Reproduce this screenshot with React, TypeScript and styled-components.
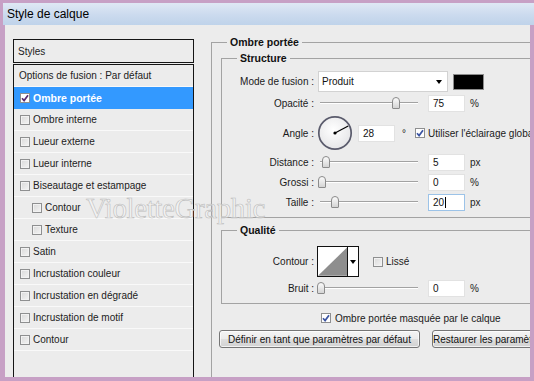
import React from 'react';
import styled, { createGlobalStyle } from 'styled-components';

const GlobalStyle = createGlobalStyle`
  html, body {
    margin: 0;
    padding: 0;
    background: #c7a0c5;
  }
  body {
    font-family: "Liberation Sans", Arial, sans-serif;
    font-size: 10px;
    color: #111;
  }
  * {
    box-sizing: border-box;
  }
`;

const Frame = styled.div`
  width: 534px;
  height: 381px;
  background: #c7a0c5;
  padding: 3px 0 0 3px;
  display: flex;
  flex-direction: column;
  overflow: hidden;
`;

const TitleBar = styled.div`
  height: 22px;
  flex: none;
  padding-left: 4px;
  display: flex;
  align-items: center;
  font-size: 12px;
  color: #000;
  background: linear-gradient(180deg, #dfe8f4 0%, #cbdaee 55%, #bfd3ea 100%);
`;

const Body = styled.div`
  position: relative;
  width: 525px;
  height: 352px;
  margin-left: 2px;
  padding: 11px 0 0 8px;
  display: flex;
  align-items: flex-start;
  gap: 17px;
  background: #ececec;
  overflow: hidden;
`;

const Watermark = styled.div`
  position: absolute;
  left: 81px;
  top: 167px;
  font-family: "Liberation Serif", "Times New Roman", serif;
  font-size: 29px;
  letter-spacing: -0.4px;
  color: rgba(248, 248, 248, 0.5);
  -webkit-text-stroke: 0.6px #bdbdbd;
  pointer-events: none;
  white-space: nowrap;
`;

/* left column: styles list */

const LeftPanel = styled.div`
  width: 181px;
  margin-top: 3px;
  display: flex;
  flex-direction: column;
  gap: 1px;
  flex: none;
`;

const StylesHeader = styled.div`
  height: 24px;
  border: 1px solid #151515;
  padding-left: 4px;
  display: flex;
  align-items: center;
  color: #222;
`;

const StyleList = styled.div`
  height: 330px;
  border: 1px solid #151515;
  border-bottom: none;
`;

const StyleRow = styled.div<{ $indent: number; $selected?: boolean }>`
  height: 22px;
  padding-left: ${(p) => p.$indent}px;
  display: flex;
  align-items: center;
  gap: 3px;
  border-bottom: 1px solid ${(p) => (p.$selected ? '#3399ff' : '#f9f9f9')};
  background: ${(p) => (p.$selected ? '#3399ff' : 'transparent')};
  color: ${(p) => (p.$selected ? '#fff' : '#222')};
  font-weight: ${(p) => (p.$selected ? 'bold' : 'normal')};
  font-size: ${(p) => (p.$selected ? '10.5px' : '10px')};
  white-space: nowrap;
`;

/* checkbox */

const Box = styled.span<{ $light?: boolean }>`
  width: 10px;
  height: 10px;
  flex: none;
  display: inline-flex;
  align-items: center;
  justify-content: center;
  border: 1px solid #8e8f90;
  background: ${(p) =>
    p.$light ? '#ffffff' : 'linear-gradient(135deg, #d9d9d9 0%, #f4f4f4 100%)'};
  box-shadow: inset 0 0 0 1px ${(p) => (p.$light ? '#fff' : '#f2f2f2')};
`;

const Check: React.FC<{ checked?: boolean; color?: string; light?: boolean }> = ({
  checked,
  color = '#3b54a2',
  light,
}) => (
  <Box $light={light || checked}>
    {checked && (
      <svg width="8" height="8" viewBox="0 0 8 8">
        <path d="M1 4.2 L3.1 6.6 L7 1.2" fill="none" stroke={color} strokeWidth="1.7" />
      </svg>
    )}
  </Box>
);

/* right column: group boxes */

const Group = styled.fieldset<{ $w: number; $pl: number; $pt: number; $pb: number; $open?: boolean }>`
  margin: 0;
  width: ${(p) => p.$w}px;
  padding: ${(p) => p.$pt}px 0 ${(p) => p.$pb}px ${(p) => p.$pl}px;
  border: 1px solid #a3a3a3;
  border-right: none;
  border-bottom: ${(p) => (p.$open ? 'none' : '1px solid #a3a3a3')};
  min-width: 0;
  display: flex;
  flex-direction: column;
`;

const OuterGroup = styled(Group)`
  height: 360px;
  flex: none;
`;

const Legend = styled.legend<{ $ml: number }>`
  margin-left: ${(p) => p.$ml}px;
  padding: 0 3px;
  font-size: 10.5px;
  line-height: 12px;
  font-weight: bold;
  color: #111;
`;

const InnerGroup = styled(Group)<{ $mt: number }>`
  margin-top: ${(p) => p.$mt}px;
`;

const FieldRow = styled.div<{ $h: number; $mt?: number }>`
  height: ${(p) => p.$h}px;
  margin-top: ${(p) => p.$mt ?? 0}px;
  display: grid;
  grid-template-columns: 92px auto;
  column-gap: 3px;
  align-items: center;
`;

const Label = styled.span`
  text-align: right;
  white-space: nowrap;
  color: #1a1a1a;
`;

const Controls = styled.div`
  display: flex;
  align-items: center;
  white-space: nowrap;
`;

const Select = styled.div`
  width: 130px;
  height: 21px;
  margin-left: 1px;
  padding: 0 5px 0 3px;
  display: flex;
  align-items: center;
  justify-content: space-between;
  background: #fff;
  border: 1px solid #d2d2d2;
`;

const Arrow = styled.span`
  width: 0;
  height: 0;
  border-left: 3.5px solid transparent;
  border-right: 3.5px solid transparent;
  border-top: 4px solid #000;
`;

const Swatch = styled.span`
  width: 31px;
  height: 16px;
  margin-left: 5px;
  background: #000;
  border: 1px solid #8c8c8c;
`;

const SliderBox = styled.div`
  position: relative;
  width: 103px;
  height: 16px;
  display: flex;
  align-items: center;
  flex: none;
`;

const Track = styled.div`
  flex: 1;
  margin: 0 2px 0 3px;
  height: 2px;
  border-top: 1px solid #a2a2a2;
  border-bottom: 1px solid #ffffff;
`;

const Thumb = styled.span<{ $left: number }>`
  position: absolute;
  left: ${(p) => p.$left}px;
  top: 2px;
  width: 8px;
  height: 12px;
  border: 1px solid #8b8b8b;
  border-radius: 4px 4px 1px 1px;
  background: linear-gradient(180deg, #fbfbfb 0%, #e4e4e4 60%, #d4d4d4 100%);
`;

const Slider: React.FC<{ at: number }> = ({ at }) => (
  <SliderBox>
    <Track />
    <Thumb $left={at - 4} />
  </SliderBox>
);

const NumberBox = styled.div<{ $w: number; $ml: number; $focus?: boolean }>`
  width: ${(p) => p.$w}px;
  height: 17px;
  margin-left: ${(p) => p.$ml}px;
  padding-left: 4px;
  display: flex;
  align-items: center;
  background: #fff;
  border: 1px solid ${(p) => (p.$focus ? '#9cc3e8' : '#e2e2e2')};
  color: #111;
`;

const Caret = styled.span`
  width: 1px;
  height: 11px;
  margin-left: 1px;
  background: #000;
`;

const Unit = styled.span<{ $ml: number }>`
  margin-left: ${(p) => p.$ml}px;
  color: #222;
`;

const DialSvg = styled.svg`
  flex: none;
`;

const Dial: React.FC<{ angle: number }> = ({ angle }) => {
  const r = (angle * Math.PI) / 180;
  const x2 = 18 + 15 * Math.cos(r);
  const y2 = 18 - 15 * Math.sin(r);
  return (
    <DialSvg width="36" height="36" viewBox="0 0 36 36">
      <defs>
        <radialGradient id="dialFill" cx="45%" cy="40%" r="65%">
          <stop offset="0" stopColor="#ffffff" />
          <stop offset="1" stopColor="#e4e4e6" />
        </radialGradient>
      </defs>
      <circle cx="18" cy="18" r="16.2" fill="url(#dialFill)" stroke="#5a5b6c" strokeWidth="1.7" />
      <line x1="18" y1="18" x2={x2} y2={y2} stroke="#000" strokeWidth="1.2" />
      <circle cx="18" cy="18" r="1.6" fill="#000" />
    </DialSvg>
  );
};

const ContourPicker = styled.div`
  width: 42px;
  height: 31px;
  display: flex;
  border: 1px solid #111;
  background: #fff;
`;

const ContourArrowCell = styled.div`
  width: 11px;
  border-left: 1px solid #111;
  display: flex;
  align-items: center;
  justify-content: center;
`;

const InlineCheck = styled.label<{ $ml: number }>`
  margin-left: ${(p) => p.$ml}px;
  display: flex;
  align-items: center;
  gap: 3px;
  color: #1a1a1a;
  white-space: nowrap;
`;

const MaskRow = styled.div`
  height: 12px;
  margin: 8px 0 0 100px;
  display: flex;
  align-items: center;
  gap: 4px;
  white-space: nowrap;
  color: #1a1a1a;
`;

const ButtonRow = styled.div`
  margin: 6px 0 0 -2px;
  display: flex;
  gap: 12px;
`;

const Button = styled.button<{ $w: number }>`
  width: ${(p) => p.$w}px;
  height: 18px;
  flex: none;
  padding: 0;
  font-family: inherit;
  font-size: 10px;
  color: #111;
  white-space: nowrap;
  overflow: hidden;
  border: 1px solid #767676;
  border-radius: 3px;
  background: linear-gradient(180deg, #f4f4f4 0%, #ececec 48%, #dedede 52%, #d2d2d2 100%);
  box-shadow: inset 0 0 0 1px rgba(255, 255, 255, 0.7);
`;

const styleItems: { label: string; indent?: boolean; checked?: boolean; selected?: boolean }[] = [
  { label: 'Ombre portée', checked: true, selected: true },
  { label: 'Ombre interne' },
  { label: 'Lueur externe' },
  { label: 'Lueur interne' },
  { label: 'Biseautage et estampage' },
  { label: 'Contour', indent: true },
  { label: 'Texture', indent: true },
  { label: 'Satin' },
  { label: 'Incrustation couleur' },
  { label: 'Incrustation en dégradé' },
  { label: 'Incrustation de motif' },
  { label: 'Contour' },
];

const SliderField: React.FC<{ label: string; at: number; value: string; unit: string; mt?: number; focus?: boolean }> = ({
  label,
  at,
  value,
  unit,
  mt,
  focus,
}) => (
  <FieldRow $h={18} $mt={mt}>
    <Label>{label}</Label>
    <Controls>
      <Slider at={at} />
      <NumberBox $w={37} $ml={8} $focus={focus}>
        {value}
        {focus && <Caret />}
      </NumberBox>
      <Unit $ml={5}>{unit}</Unit>
    </Controls>
  </FieldRow>
);

export default function App() {
  return (
    <>
      <GlobalStyle />
      <Frame>
        <TitleBar>Style de calque</TitleBar>
        <Body>
          <LeftPanel>
            <StylesHeader>Styles</StylesHeader>
            <StyleList>
              <StyleRow $indent={5}>Options de fusion : Par défaut</StyleRow>
              {styleItems.map((item, i) => (
                <StyleRow key={i} $indent={item.indent ? 18 : 6} $selected={item.selected}>
                  <Check checked={item.checked} color="#5a2a72" />
                  {item.label}
                </StyleRow>
              ))}
            </StyleList>
          </LeftPanel>

          <OuterGroup $w={345} $pl={9} $pt={4} $pb={0} $open>
            <Legend $ml={6}>Ombre portée</Legend>

            <InnerGroup $w={330} $pl={0} $pt={7} $pb={6} $mt={0}>
              <Legend $ml={15}>Structure</Legend>
              <FieldRow $h={20}>
                <Label>Mode de fusion :</Label>
                <Controls>
                  <Select>
                    Produit
                    <Arrow />
                  </Select>
                  <Swatch />
                </Controls>
              </FieldRow>
              <SliderField label="Opacité :" at={79} value="75" unit="%" mt={3} />
              <FieldRow $h={35} $mt={3}>
                <Label>Angle :</Label>
                <Controls>
                  <Dial angle={28} />
                  <NumberBox $w={37} $ml={5}>28</NumberBox>
                  <Unit $ml={7}>°</Unit>
                  <InlineCheck $ml={9}>
                    <Check checked />
                    Utiliser l'éclairage global
                  </InlineCheck>
                </Controls>
              </FieldRow>
              <SliderField label="Distance :" at={9} value="5" unit="px" mt={3} />
              <SliderField label="Grossi :" at={5} value="0" unit="%" mt={2} />
              <SliderField label="Taille :" at={18} value="20" unit="px" mt={2} focus />
            </InnerGroup>

            <InnerGroup $w={330} $pl={0} $pt={10} $pb={6} $mt={6}>
              <Legend $ml={15}>Qualité</Legend>
              <FieldRow $h={31}>
                <Label>Contour :</Label>
                <Controls>
                  <ContourPicker>
                    <svg width="30" height="29" viewBox="0 0 30 29">
                      <rect x="0" y="0" width="30" height="29" fill="#fff" />
                      <polygon points="0,29 30,0 30,29" fill="#8e8e8e" />
                    </svg>
                    <ContourArrowCell>
                      <Arrow />
                    </ContourArrowCell>
                  </ContourPicker>
                  <InlineCheck $ml={14}>
                    <Check />
                    Lissé
                  </InlineCheck>
                </Controls>
              </FieldRow>
              <SliderField label="Bruit :" at={4} value="0" unit="%" mt={2} />
            </InnerGroup>

            <MaskRow>
              <Check checked />
              Ombre portée masquée par le calque
            </MaskRow>

            <ButtonRow>
              <Button $w={201}>Définir en tant que paramètres par défaut</Button>
              <Button $w={160}>Restaurer les paramètres par défaut</Button>
            </ButtonRow>
          </OuterGroup>

          <Watermark>VioletteGraphic</Watermark>
        </Body>
      </Frame>
    </>
  );
}
